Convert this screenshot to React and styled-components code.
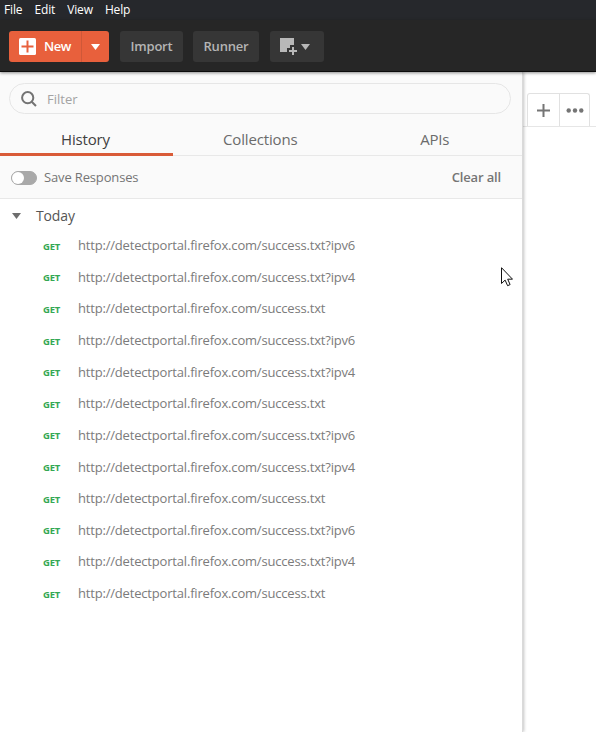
import React from 'react';
import styled, { createGlobalStyle } from 'styled-components';

const GlobalStyle = createGlobalStyle`
  *, *::before, *::after { box-sizing: border-box; }
  body { margin: 0; background: #fff; font-family: "Open Sans", "Noto Sans", sans-serif; }
  button { font-family: inherit; }
`;

const Window = styled.div`
  position: relative;
  width: 596px;
  height: 732px;
  display: flex;
  flex-direction: column;
  overflow: hidden;
  background: #fff;
`;

const MenuBar = styled.nav`
  flex: none;
  height: 20px;
  display: flex;
  align-items: center;
  gap: 12px;
  padding-left: 4px;
  background: #26282c;
`;

const MenuItem = styled.span`
  font-size: 12px;
  line-height: 20px;
  letter-spacing: -0.14px;
  color: #fff;
`;

const Toolbar = styled.header`
  flex: none;
  position: relative;
  z-index: 2;
  height: 52px;
  display: flex;
  align-items: flex-start;
  padding: 11px 0 0 9px;
  background: #262626;
  border-bottom: 1px solid #0c0c0c;
  box-shadow: 0 1px 3px rgba(0, 0, 0, 0.45);
`;

const SplitButton = styled.div`
  display: flex;
  width: 100px;
  height: 31px;
  margin-right: 11px;
  border-radius: 3px;
  overflow: hidden;
  background: #e8603c;
`;

const NewButton = styled.button`
  display: flex;
  align-items: center;
  width: 73px;
  padding: 0 0 0 10px;
  gap: 8px;
  border: 0;
  border-right: 1px solid #cf5838;
  background: none;
  color: #fff;
  font-size: 13px;
  font-weight: 600;
  letter-spacing: -0.5px;
`;

const CaretButton = styled.button`
  flex: 1;
  display: flex;
  align-items: center;
  justify-content: center;
  padding: 0;
  border: 0;
  background: none;
`;

const ToolButton = styled.button`
  display: flex;
  align-items: center;
  justify-content: center;
  gap: 4px;
  width: ${(p) => p.$width}px;
  height: 31px;
  margin-right: ${(p) => p.$gap || 0}px;
  padding: 0;
  border: 0;
  border-radius: 3px;
  background: #363636;
  color: #b4b4b4;
  font-size: 13px;
  font-weight: 600;
  letter-spacing: -0.2px;
`;

const IconToolButton = styled(ToolButton)`
  justify-content: flex-start;
  padding-left: 10px;
`;

const ButtonLabel = styled.span`
  padding-bottom: 2px;
`;

const Body = styled.div`
  flex: 1;
  display: flex;
  min-height: 0;
`;

const Sidebar = styled.aside`
  position: relative;
  z-index: 1;
  flex: none;
  width: 523px;
  display: flex;
  flex-direction: column;
  border-right: 1px solid #dadada;
  box-shadow: 1px 0 3px rgba(0, 0, 0, 0.24);
  background: #fff;
`;

const SearchRow = styled.div`
  height: 52px;
  padding: 11px 11px 0 9px;
  background: #fafafa;
`;

const SearchField = styled.label`
  display: flex;
  align-items: center;
  height: 31px;
  padding-left: 11px;
  gap: 10px;
  border: 1px solid #e6e6e6;
  border-radius: 16px;
  color: #a3a3a3;
  font-size: 13px;
`;

const Tabs = styled.div`
  display: flex;
  height: 32px;
  background: #fafafa;
`;

const Tab = styled.div`
  flex: ${(p) => (p.$active ? '0 0 173px' : '1')};
  display: flex;
  justify-content: center;
  padding: ${(p) => (p.$active ? '0 2px 0 0' : '0')};
  font-size: 15px;
  line-height: 30px;
  letter-spacing: -0.16px;
  color: ${(p) => (p.$active ? '#404040' : '#6b6b6b')};
  border-bottom: ${(p) => (p.$active ? '3px solid #d95b38' : '1px solid #e8e8e8')};
`;

const Actions = styled.div`
  display: flex;
  align-items: center;
  height: 43px;
  padding: 0 21px 0 11px;
  background: #fafafa;
  border-bottom: 1px solid #e8e8e8;
  color: #757575;
  font-size: 13px;
  letter-spacing: -0.15px;
`;

const Switch = styled.span`
  width: 26px;
  height: 14px;
  margin: 1px 7px 0 0;
  border: 1px solid #a9a9a9;
  border-radius: 7px;
  background: #a9a9a9;

  &::before {
    content: '';
    display: block;
    width: 12px;
    height: 12px;
    border-radius: 50%;
    background: #fff;
  }
`;

const ClearAll = styled.span`
  margin-left: auto;
  font-weight: 600;
`;

const GroupHeader = styled.div`
  display: flex;
  align-items: center;
  height: 31px;
  padding: 2px 0 0 12px;
  gap: 15px;
  color: #555;
  font-size: 14px;
  letter-spacing: -0.15px;
`;

const HistoryList = styled.ul`
  margin: -0.6px 0 0;
  padding: 0;
  list-style: none;
`;

const HistoryItem = styled.li`
  display: flex;
  align-items: center;
  height: 31.63px;
  padding-left: 43px;
`;

const Method = styled.span`
  width: 35px;
  padding-top: 2px;
  font-size: 9.5px;
  font-weight: 700;
  letter-spacing: -0.2px;
  color: #34a853;
`;

const Url = styled.span`
  font-size: 13px;
  letter-spacing: -0.185px;
  color: #7b7b7b;
`;

const Workspace = styled.main`
  flex: 1;
  display: flex;
  flex-direction: column;
`;

const TabStrip = styled.div`
  display: flex;
  align-items: flex-end;
  height: 55px;
  padding-left: 4px;
  border-bottom: 1px solid #e6e6e6;
`;

const TabControls = styled.div`
  display: flex;
  width: 63px;
  height: 33px;
  border: 1px solid #e1e1e1;
  border-bottom: 0;
  border-radius: 3px 3px 0 0;
`;

const TabControl = styled.button`
  display: flex;
  align-items: center;
  justify-content: center;
  width: ${(p) => p.$width}px;
  padding: 0;
  border: 0;
  border-right: ${(p) => (p.$divided ? '1px solid #e1e1e1' : '0')};
  background: none;
`;

const Pointer = styled.svg`
  position: absolute;
  z-index: 3;
  left: 501px;
  top: 267px;
`;

const Caret = ({ color, width = 9, height = 6 }) => (
  <svg width={width} height={height} viewBox="0 0 9 6">
    <path d="M0 0h9L4.5 6z" fill={color} />
  </svg>
);

const PlusSquare = () => (
  <svg width="17" height="17" viewBox="0 0 17 17">
    <rect width="17" height="17" rx="1.5" fill="#fff" />
    <path d="M8.5 2.5v12M2.5 8.5h12" stroke="#e8603c" strokeWidth="2" />
  </svg>
);

const WindowPlus = () => (
  <svg width="17" height="17" viewBox="0 0 17 17">
    <path d="M0 0h14v7h-4v3H7v4H0z" fill="#b8b8b8" />
    <path d="M13 9v8M9 13h8" stroke="#b8b8b8" strokeWidth="2" />
  </svg>
);

const SearchIcon = () => (
  <svg width="16" height="16" viewBox="0 0 16 16" fill="none" stroke="#737373" strokeWidth="2">
    <circle cx="6.7" cy="6.7" r="5.6" />
    <path d="M10.7 10.7l4.3 4.3" />
  </svg>
);

const base = 'http://detectportal.firefox.com/success.txt';
const requests = Array.from({ length: 12 }, (_, i) => base + ['?ipv6', '?ipv4', ''][i % 3]);

export default function App() {
  return (
    <Window>
      <GlobalStyle />
      <MenuBar>
        <MenuItem>File</MenuItem>
        <MenuItem>Edit</MenuItem>
        <MenuItem>View</MenuItem>
        <MenuItem>Help</MenuItem>
      </MenuBar>
      <Toolbar>
        <SplitButton>
          <NewButton><PlusSquare /><ButtonLabel>New</ButtonLabel></NewButton>
          <CaretButton><Caret color="#fff" /></CaretButton>
        </SplitButton>
        <ToolButton $width={63} $gap={10}><ButtonLabel>Import</ButtonLabel></ToolButton>
        <ToolButton $width={66} $gap={11}><ButtonLabel>Runner</ButtonLabel></ToolButton>
        <IconToolButton $width={54}><WindowPlus /><Caret color="#b8b8b8" /></IconToolButton>
      </Toolbar>
      <Body>
        <Sidebar>
          <SearchRow>
            <SearchField><SearchIcon />Filter</SearchField>
          </SearchRow>
          <Tabs>
            <Tab $active>History</Tab>
            <Tab>Collections</Tab>
            <Tab>APIs</Tab>
          </Tabs>
          <Actions>
            <Switch />
            Save Responses
            <ClearAll>Clear all</ClearAll>
          </Actions>
          <GroupHeader><Caret color="#6e6e6e" />Today</GroupHeader>
          <HistoryList>
            {requests.map((url, i) => (
              <HistoryItem key={i}>
                <Method>GET</Method>
                <Url>{url}</Url>
              </HistoryItem>
            ))}
          </HistoryList>
        </Sidebar>
        <Workspace>
          <TabStrip>
            <TabControls>
              <TabControl $width={32} $divided>
                <svg width="13" height="13" viewBox="0 0 13 13">
                  <path d="M6.5 0v13M0 6.5h13" stroke="#757575" strokeWidth="2" />
                </svg>
              </TabControl>
              <TabControl $width={29}>
                <svg width="18" height="5" viewBox="0 0 18 5" fill="#757575">
                  <circle cx="2.7" cy="2.5" r="2.2" />
                  <circle cx="9" cy="2.5" r="2.2" />
                  <circle cx="15.3" cy="2.5" r="2.2" />
                </svg>
              </TabControl>
            </TabControls>
          </TabStrip>
        </Workspace>
      </Body>
      <Pointer width="12" height="20" viewBox="0 0 12 20">
        <path d="M.5.7v15.8l3.6-3.4 2.5 5.6 2.5-1.1-2.4-5.4h4.8z" fill="#fff" stroke="#111" />
      </Pointer>
    </Window>
  );
}
